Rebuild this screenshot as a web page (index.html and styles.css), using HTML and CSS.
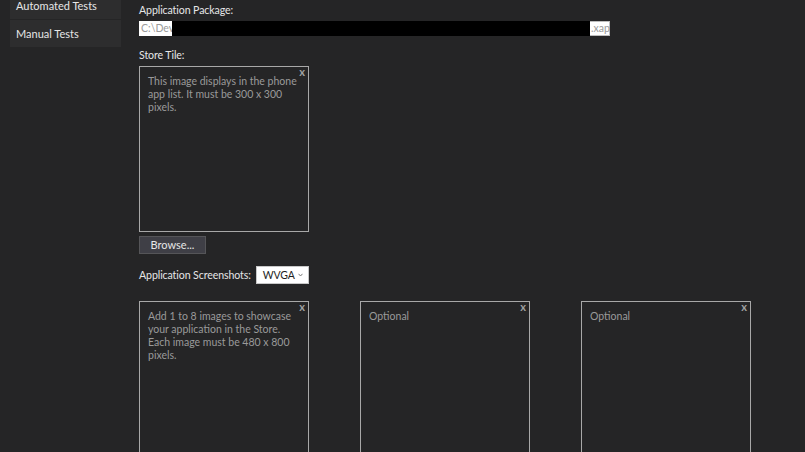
FILE: index.html
```html
<!DOCTYPE html>
<html>
<head>
<meta charset="utf-8">
<link rel="stylesheet" href="styles.css">
</head>
<body>
<div class="page">
  <nav class="sidebar">
    <div class="nav-item first">Automated Tests</div>
    <div class="nav-item">Manual Tests</div>
  </nav>
  <main class="main">
    <div class="label pkg-label">Application Package:</div>
    <div class="path-input">
      <span class="path-start">C:\Dev</span>
      <span class="redact"></span>
      <span class="path-end">.xap</span>
    </div>
    <div class="label tile-label">Store Tile:</div>
    <div class="drop-box tile">
      <span class="close">x</span>
      <p class="hint">This image displays in the phone<br>app list. It must be 300 x 300<br>pixels.</p>
    </div>
    <button class="browse">Browse...</button>
    <div class="shots-row">
      <span class="label">Application Screenshots:</span>
      <span class="select"><span class="select-text">WVGA</span>
        <svg class="chev" width="5" height="4" viewBox="0 0 5 4"><path d="M0.5 0.8 L2.5 3 L4.5 0.8" fill="none" stroke="#7a7a7a" stroke-width="1"/></svg>
      </span>
    </div>
    <div class="shots">
      <div class="drop-box shot">
        <span class="close">x</span>
        <p class="hint">Add 1 to 8 images to showcase<br>your application in the Store.<br>Each image must be 480 x 800<br>pixels.</p>
      </div>
      <div class="drop-box shot">
        <span class="close">x</span>
        <p class="hint">Optional</p>
      </div>
      <div class="drop-box shot">
        <span class="close">x</span>
        <p class="hint">Optional</p>
      </div>
    </div>
  </main>
</div>
</body>
</html>
```

FILE: styles.css
```css
html, body {
  margin: 0;
  padding: 0;
  background: #252526;
  overflow: hidden;
  height: 452px;
}
body {
  font-family: Lato, "Noto Sans", sans-serif;
  font-size: 11px;
  color: #e6e6e6;
}
.page {
  display: flex;
  align-items: flex-start;
}
.sidebar {
  margin-left: 10px;
  width: 111px;
  background: #2d2d2e;
  display: flex;
  flex-direction: column;
}
.nav-item {
  height: 27px;
  line-height: 27px;
  padding-left: 6px;
  color: #e6e6e6;
  font-size: 11px;
}
.nav-item.first {
  height: 20px;
  line-height: 14px;
  margin-top: -1px;
  border-bottom: 1px solid #252526;
}
.main {
  margin-left: 18px;
  display: flex;
  flex-direction: column;
  align-items: flex-start;
}
.label {
  font-size: 10.6px;
  letter-spacing: -0.1px;
  line-height: 14px;
  color: #e6e6e6;
}
.pkg-label {
  margin-top: 3px;
}
.path-input {
  margin-top: 4px;
  width: 471px;
  height: 15px;
  display: flex;
  background: #ffffff;
  font-size: 10.5px;
  line-height: 15px;
  color: #9a9a9a;
}
.path-start {
  padding-left: 2px;
  width: 31px;
}
.redact {
  flex: 1;
  background: #000;
}
.path-end {
  width: 20px;
  box-sizing: border-box;
  padding-left: 1px;
  border: 1px solid #bdbdbd;
  border-left: none;
  line-height: 13px;
}
.tile-label {
  margin-top: 12px;
}
.drop-box {
  position: relative;
  box-sizing: border-box;
  width: 170px;
  border: 1px solid #a8a8a8;
  background: #252526;
}
.tile {
  margin-top: 4px;
  height: 166px;
}
.close {
  position: absolute;
  top: -1px;
  right: 3px;
  font-size: 11px;
  font-weight: 700;
  line-height: 12px;
  color: #a0a0a0;
}
.hint {
  margin: 0;
  padding: 8px 8px 0 8px;
  font-size: 10.5px;
  line-height: 13px;
  color: #9a9a9a;
}
.browse {
  margin-top: 4px;
  width: 67px;
  height: 18px;
  padding: 0;
  background: #3f3f46;
  border: 1px solid #555558;
  color: #e6e6e6;
  font-family: inherit;
  font-size: 11px;
  line-height: 16px;
}
.shots-row {
  margin-top: 12px;
  display: flex;
  align-items: center;
  gap: 5px;
}
.select {
  width: 53px;
  height: 18px;
  box-sizing: border-box;
  background: #ffffff;
  border: 1px solid #c8c8c8;
  color: #1e1e1e;
  font-size: 10.5px;
  letter-spacing: -0.2px;
  line-height: 16px;
  padding-left: 6px;
  display: flex;
  align-items: center;
  gap: 7px;
}
.select-text {
  width: 28px;
}
.chev {
  display: block;
}
.shots {
  margin-top: 17px;
  display: flex;
  gap: 51px;
}
.shot {
  height: 200px;
}
```
